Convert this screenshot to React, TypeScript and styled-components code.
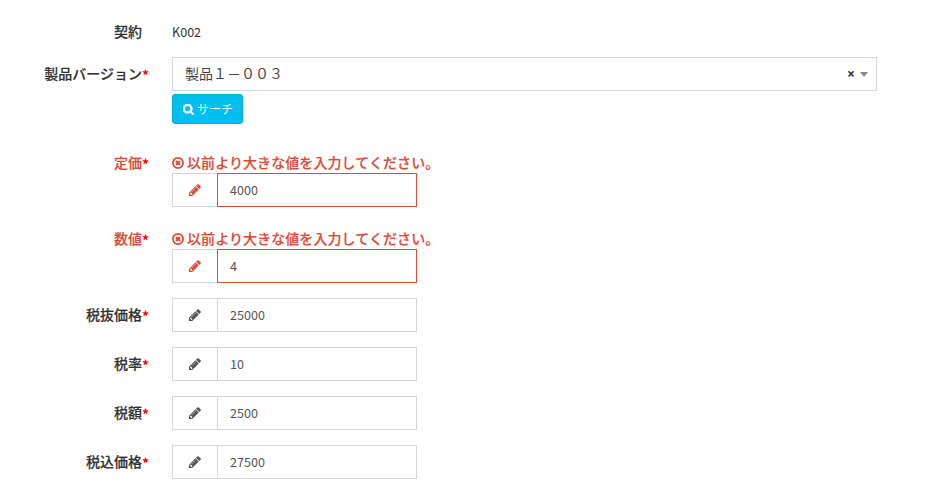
import React from "react";
import styled, { createGlobalStyle } from "styled-components";

const Global = createGlobalStyle`
  *, *::before, *::after { box-sizing: border-box; }
  body {
    margin: 0;
    background: #fff;
    color: #333;
    font: 14px/20px "Noto Sans CJK JP", sans-serif;
    overflow: hidden;
  }
`;

const Form = styled.form`
  display: flex;
  flex-direction: column;
  gap: 15px;
  padding-top: 15px;
`;

const Row = styled.div<{ $gap?: number }>`
  display: grid;
  grid-template-columns: 149px 705px;
  column-gap: 23px;
  align-items: start;
  margin-bottom: ${(p) => p.$gap ?? 0}px;
`;

const Label = styled.label<{ $error?: boolean; $inset?: number }>`
  display: flex;
  justify-content: flex-end;
  padding: 6px ${(p) => p.$inset ?? 0}px 0 0;
  height: 27px;
  font-weight: 500;
  -webkit-text-stroke: 0.2px currentColor;
  white-space: nowrap;
  color: ${(p) => (p.$error ? "#dd4b39" : "#333")};
`;

const Required = styled.span`
  width: 7px;
  padding-top: 2px;
  color: #f00;
  font: 700 14px/20px "Noto Sans CJK JP", sans-serif;
  -webkit-text-stroke: 0;
`;

const StaticValue = styled.div`
  height: 27px;
  padding-top: 7px;
  font-size: 12.6px;
`;

const Field = styled.div`
  display: flex;
  flex-direction: column;
  align-items: flex-start;
`;

const Select = styled.div`
  display: flex;
  align-items: center;
  width: 705px;
  height: 34px;
  padding: 0 8px 0 12px;
  border: 1px solid #d2d6de;
  color: #444;
`;

const SelectText = styled.span`
  flex: 1;
  padding-bottom: 2px;
`;

const Clear = styled.span`
  width: 7px;
  margin-right: 6px;
  padding-bottom: 1px;
  font: 700 14px/20px "Open Sans", sans-serif;
  color: #333;
`;

const Caret = styled.span`
  border: 4px solid transparent;
  border-top: 5px solid #888;
  border-bottom: 0;
`;

const SearchButton = styled.button`
  display: flex;
  align-items: center;
  gap: 3px;
  width: 71px;
  height: 30px;
  margin-top: 3px;
  padding: 0 0 0 10px;
  border: 1px solid #00acd6;
  border-radius: 3px;
  background: #00c0ef;
  color: #fff;
  font: 12px/18px "Noto Sans CJK JP", sans-serif;
  white-space: nowrap;
`;

const ErrorText = styled.div`
  display: flex;
  align-items: center;
  gap: 3px;
  height: 20px;
  margin-top: 7px;
  color: #dd4b39;
  font-weight: 500;
  letter-spacing: 0.08px;
  -webkit-text-stroke: 0.2px currentColor;
  white-space: nowrap;
`;

const ErrorMessage = styled.span`
  padding-bottom: 2px;
`;

const InputGroup = styled.div`
  display: flex;
  width: 245px;
  height: 34px;
`;

const Addon = styled.span<{ $error?: boolean }>`
  display: flex;
  align-items: center;
  justify-content: center;
  width: 45px;
  border: 1px solid #d2d6de;
  border-right: 0;
  color: ${(p) => (p.$error ? "#dd4b39" : "#555")};
`;

const Input = styled.input<{ $error?: boolean }>`
  width: 200px;
  padding: 0 12px;
  border: 1px solid ${(p) => (p.$error ? "#dd4b39" : "#d2d6de")};
  border-radius: 0;
  outline: 0;
  background: #fff;
  color: #555;
  font: 12.6px/20px "Noto Sans CJK JP", sans-serif;
`;

const Svg = styled.svg`
  flex: none;
  fill: currentColor;
`;

const icons = {
  pencil:
    "M491 1536l91-91-235-235-91 91v107h128v128h107zm523-928q0-22-22-22-10 0-17 7l-542 542q-7 7-7 17 0 22 22 22 10 0 17-7l542-542q7-7 7-17zm-54-192l416 416-832 832h-416v-416zm683 96q0 53-37 90l-166 166-416-416 166-165q36-38 90-38 53 0 91 38l235 234q37 39 37 91z",
  timesCircle:
    "M1225 1079l-146 146q-10 10-23 10t-23-10l-137-137-137 137q-10 10-23 10t-23-10l-146-146q-10-10-10-23t10-23l137-137-137-137q-10-10-10-23t10-23l146-146q10-10 23-10t23 10l137 137 137-137q10-10 23-10t23 10l146 146q10 10 10 23t-10 23l-137 137 137 137q10 10 10 23t-10 23zM896 352a544 544 0 1 0 0 1088a544 544 0 1 0 0-1088zM896 128a768 768 0 1 1 0 1536a768 768 0 1 1 0-1536z",
  search:
    "M1216 832q0-185-131.5-316.5t-316.5-131.5-316.5 131.5-131.5 316.5 131.5 316.5 316.5 131.5 316.5-131.5 131.5-316.5zm512 832q0 52-38 90t-90 38q-54 0-90-38l-343-342q-179 124-399 124-143 0-273.5-55.5t-225-150-150-225-55.5-273.5 55.5-273.5 150-225 225-150 273.5-55.5 273.5 55.5 225 150 150 225 55.5 273.5q0 220-124 399l343 343q37 37 37 90z",
};

const Icon = ({
  name,
  size = 14,
  viewBox = "0 0 1792 1792",
  weight = 0,
}: {
  name: keyof typeof icons;
  size?: number;
  viewBox?: string;
  weight?: number;
}) => (
  <Svg width={size} height={size} viewBox={viewBox} aria-hidden="true">
    <path fillRule="evenodd" stroke="currentColor" strokeWidth={weight} d={icons[name]} />
  </Svg>
);

interface NumberField {
  label: string;
  value: string;
  error?: string;
}

const message = "以前より大きな値を入力してください。";

const fields: NumberField[] = [
  { label: "定価", value: "4000", error: message },
  { label: "数値", value: "4", error: message },
  { label: "税抜価格", value: "25000" },
  { label: "税率", value: "10" },
  { label: "税額", value: "2500" },
  { label: "税込価格", value: "27500" },
];

export default function App() {
  return (
    <>
      <Global />
      <Form>
        <Row>
          <Label $inset={7}>契約</Label>
          <StaticValue>K002</StaticValue>
        </Row>
        <Row $gap={7}>
          <Label>製品バージョン<Required>*</Required></Label>
          <Field>
            <Select>
              <SelectText>製品１－００３</SelectText>
              <Clear>×</Clear>
              <Caret />
            </Select>
            <SearchButton type="button">
              <Icon name="search" size={11} viewBox="64 128 1664 1664" weight={90} />
              サーチ
            </SearchButton>
          </Field>
        </Row>
        {fields.map(({ label, value, error }) => (
          <Row key={label}>
            <Label $error={!!error}>{label}<Required>*</Required></Label>
            <Field>
              {error && (
                <ErrorText>
                  <Icon name="timesCircle" size={12} viewBox="128 128 1536 1536" />
                  <ErrorMessage>{error}</ErrorMessage>
                </ErrorText>
              )}
              <InputGroup>
                <Addon $error={!!error}><Icon name="pencil" /></Addon>
                <Input $error={!!error} defaultValue={value} />
              </InputGroup>
            </Field>
          </Row>
        ))}
      </Form>
    </>
  );
}
